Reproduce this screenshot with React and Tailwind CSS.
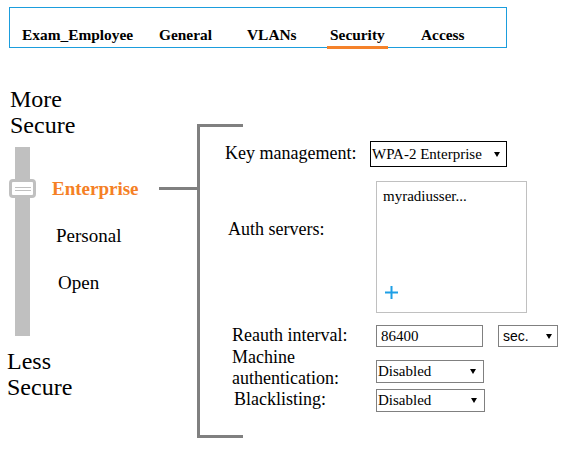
import React from "react";

const tabs = [
  { label: "Exam_Employee", w: "w-[137px]" },
  { label: "General", w: "w-[88px]" },
  { label: "VLANs", w: "w-[83px]" },
  { label: "Security", w: "w-[91px]", active: true },
  { label: "Access", w: "w-[80px]" },
];

// little black triangle used by the fake selects
function Arrow() {
  return (
    <svg width="6" height="5" viewBox="0 0 6 5" className="shrink-0">
      <path d="M0 0 L6 0 L3 5 Z" fill="#000" />
    </svg>
  );
}

function FakeSelect({ value, className, textClass = "text-[15px]" }) {
  return (
    <div className={`flex items-center justify-between border bg-white ${className}`}>
      <span className={`${textClass} leading-none text-black`}>{value}</span>
      <Arrow />
    </div>
  );
}

export default function App() {
  return (
    <div className="w-[580px] h-[453px] bg-white text-black overflow-hidden font-['Liberation_Serif',serif]">
      {/* tab bar */}
      <div className="ml-[9px] mt-[7px] w-[498px] h-[41px] border border-[#1b9ddd] flex items-end pl-[12px]">
        {tabs.map((t) => (
          <div key={t.label} className={`${t.w} flex`}>
            {t.active ? (
              <span className="-ml-[3px] px-[3px] pb-[3px] -mb-[2px] border-b-[3px] border-[#f5822a] text-[15.4px] leading-[17px] font-bold">
                {t.label}
              </span>
            ) : (
              <span className="pb-[4px] text-[15.4px] leading-[17px] font-bold">
                {t.label}
              </span>
            )}
          </div>
        ))}
      </div>

      <div className="flex items-start">
        {/* left scale */}
        <div className="w-[159px] pt-[38px]">
          <div className="pl-[10px] text-[24px] leading-[26px]">
            More
            <br />
            Secure
          </div>
          <div className="flex mt-[9px]">
            <div className="relative ml-[15px] w-[15px] h-[189px] bg-[#c0c0c0]">
              <div className="absolute left-[-6px] top-[32px] w-[27px] h-[19px] rounded-[4px] border-[3px] border-[#c0c0c0] bg-white flex flex-col items-center justify-center gap-[2px]">
                <div className="w-[16px] h-px bg-[#c0c0c0]" />
                <div className="w-[16px] h-px bg-[#c0c0c0]" />
              </div>
            </div>
            <div className="flex flex-col pt-[30px] gap-[23px] text-[19px] leading-[24px]">
              <span className="ml-[22px] font-bold text-[#f58025]">Enterprise</span>
              <span className="ml-[26px]">Personal</span>
              <span className="ml-[28px]">Open</span>
            </div>
          </div>
          <div className="mt-[12px] pl-[7px] text-[24px] leading-[26px]">
            Less
            <br />
            Secure
          </div>
        </div>

        {/* connector */}
        <div className="mt-[139px] w-[38px] h-[3px] bg-[#808080]" />

        {/* bracket + form */}
        <div className="mt-[76px] h-[314px] border-l-[3px] border-[#808080] flex flex-col">
          <div className="w-[43px] h-[3px] bg-[#808080]" />

          <div className="pl-[25px] pt-[14px] text-[18px]">
            <div className="flex items-start">
              <span className="w-[145px] mt-[1px] leading-[22px]">Key management:</span>
              <FakeSelect
                value="WPA-2 Enterprise"
                className="w-[137px] h-[26px] border-black pl-[1px] pr-[6px]"
              />
            </div>

            <div className="flex items-start mt-[14px]">
              <span className="ml-[3px] w-[148px] mt-[37px] leading-[22px]">Auth servers:</span>
              <div className="w-[151px] h-[132px] border border-[#c0c0c0] flex flex-col justify-between pl-[6px] pt-[6px] pb-[13px]">
                <span className="text-[15px] leading-[17px]">myradiusser...</span>
                <svg width="13" height="13" viewBox="0 0 13 13" className="ml-[2px]">
                  <rect x="5.5" y="0" width="2" height="13" fill="#1e9fe6" />
                  <rect x="0" y="5.5" width="13" height="2" fill="#1e9fe6" />
                </svg>
              </div>
            </div>

            <div className="flex items-start mt-[12px]">
              <span className="ml-[7px] w-[144px] leading-[21px]">Reauth interval:</span>
              <div className="w-[107px] h-[22px] border border-[#808080] flex items-center pl-[4px]">
                <span className="text-[15px] leading-none">86400</span>
              </div>
              <FakeSelect
                value="sec."
                textClass="text-[14px] font-['Liberation_Sans',sans-serif]"
                className="ml-[15px] w-[60px] h-[22px] border-[#808080] pl-[4px] pr-[5px]"
              />
            </div>

            <div className="flex items-start">
              <span className="ml-[7px] w-[144px] leading-[21px]">
                Machine
                <br />
                authentication:
              </span>
              <FakeSelect
                value="Disabled"
                className="mt-[13px] w-[108px] h-[23px] border-[#808080] pl-[1px] pr-[7px]"
              />
            </div>

            <div className="flex items-start">
              <span className="ml-[9px] w-[142px] leading-[21px]">Blacklisting:</span>
              <FakeSelect
                value="Disabled"
                className="w-[109px] h-[23px] border-[#808080] pl-[1px] pr-[7px]"
              />
            </div>
          </div>

          <div className="mt-auto w-[43px] h-[3px] bg-[#808080]" />
        </div>
      </div>
    </div>
  );
}
